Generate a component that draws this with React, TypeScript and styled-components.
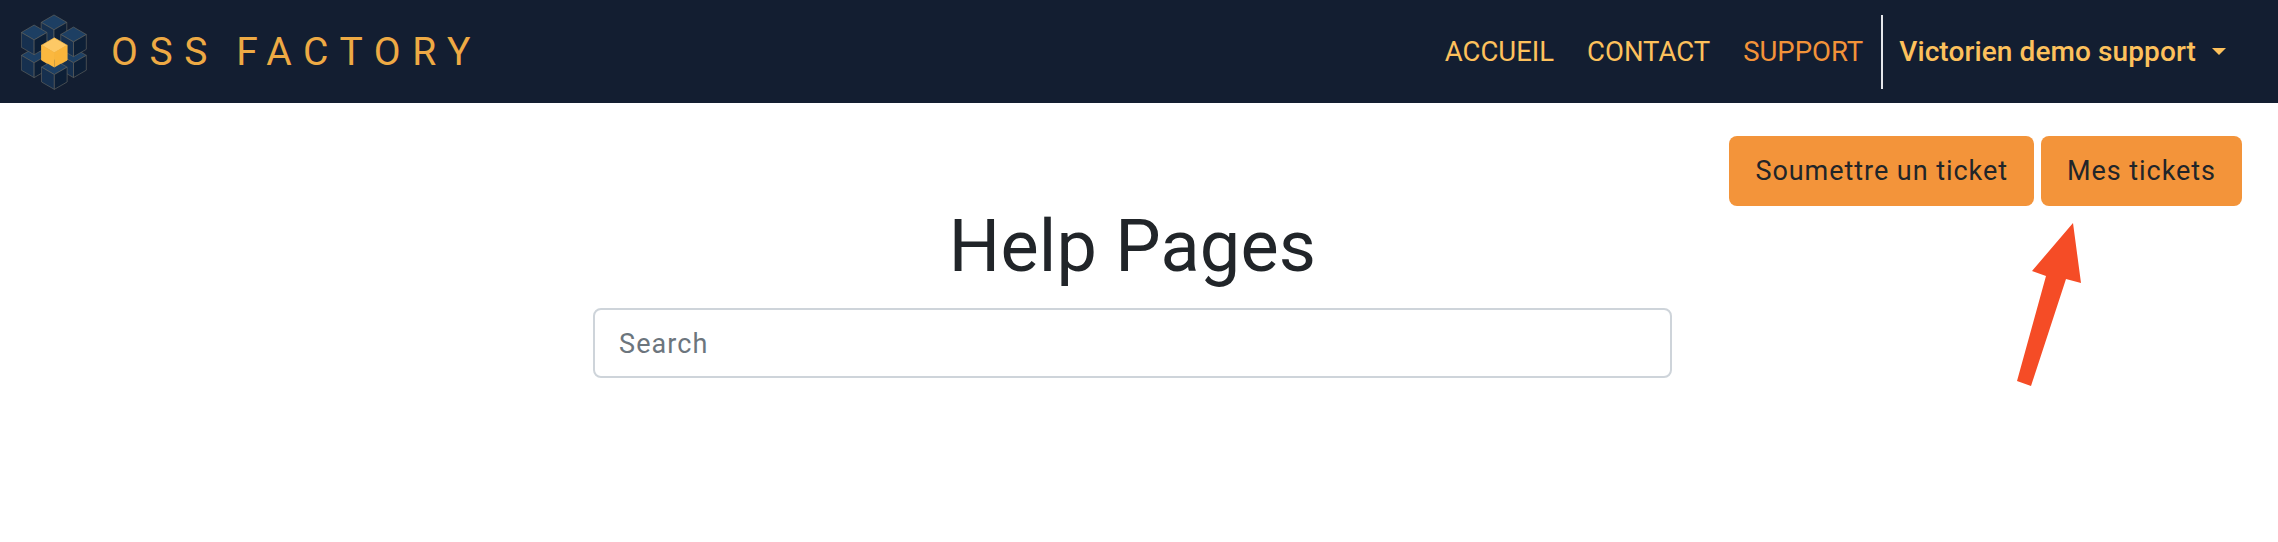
import styled, { createGlobalStyle } from 'styled-components';

const GlobalStyle = createGlobalStyle`
    html, body {
        margin: 0;
        background: #fff;
        font-family: "Roboto", "Liberation Sans", sans-serif;
    }
`;

const Navbar = styled.nav`
    display: flex;
    align-items: center;
    justify-content: space-between;
    height: 103px;
    padding: 0 52px 0 21px;
    background: #131e31;
`;

const Brand = styled.a`
    display: flex;
    align-items: center;
    gap: 24px;
`;

const BrandName = styled.span`
    font-size: 39px;
    font-weight: 400;
    letter-spacing: 11.6px;
    word-spacing: -4px;
    white-space: nowrap;
    color: #eeaa44;
`;

const NavLinks = styled.div`
    display: flex;
    align-items: center;
`;

const NavLink = styled.a<{ $active?: boolean }>`
    margin-right: 33px;
    font-size: 27.5px;
    color: ${props => (props.$active ? '#f39339' : '#fdc15c')};
    &:nth-child(3) {
        margin-right: 18px;
    }
`;

const UserMenu = styled.div`
    display: flex;
    align-items: center;
    gap: 16px;
    height: 74px;
    padding-left: 16px;
    border-left: 2px solid #e4e6ea;
    font-size: 28px;
    font-weight: 500;
    letter-spacing: 0.1px;
    color: #fdc15c;
`;

const Caret = styled.span`
    width: 0;
    height: 0;
    border-top: 7px solid #fdc15c;
    border-left: 7px solid transparent;
    border-right: 7px solid transparent;
`;

const Page = styled.main`
    position: relative;
    height: 439px;
`;

const Actions = styled.div`
    display: flex;
    justify-content: flex-end;
    gap: 7px;
    padding: 33px 36px 0 0;
`;

const ActionButton = styled.button`
    height: 70px;
    padding: 0 26px;
    border: 0;
    border-radius: 8px;
    background: #f3943a;
    color: #212529;
    font-family: inherit;
    font-size: 27px;
    letter-spacing: 0.95px;
`;

const Content = styled.section`
    display: flex;
    flex-direction: column;
    align-items: center;
    padding-right: 13px;
`;

const Title = styled.h1`
    margin: -2px 0 18px;
    font-size: 72px;
    font-weight: 400;
    letter-spacing: 0.2px;
    line-height: 86px;
    color: #212529;
`;

const SearchInput = styled.input`
    box-sizing: border-box;
    width: 1079px;
    height: 70px;
    padding: 2px 24px 0;
    border: 2px solid #ced4da;
    border-radius: 8px;
    font-family: inherit;
    font-size: 27px;
    letter-spacing: 1.1px;
    &::placeholder {
        color: #6c757d;
        opacity: 1;
    }
`;

const ArrowMark = styled.svg`
    position: absolute;
    left: 2010px;
    top: 116px;
`;

type CubeProps = {
    x: number;
    y: number;
    top: string;
    left: string;
    right: string;
    edge: string;
};

const Cube = ({ x, y, top, left, right, edge }: CubeProps) => (
    <g stroke={edge} strokeWidth="2" strokeLinejoin="round">
        <polygon points={`${x},${y} ${x + 38},${y + 22} ${x},${y + 44} ${x - 38},${y + 22}`} fill={top} />
        <polygon points={`${x - 38},${y + 22} ${x},${y + 44} ${x},${y + 88} ${x - 38},${y + 66}`} fill={left} />
        <polygon points={`${x + 38},${y + 22} ${x},${y + 44} ${x},${y + 88} ${x + 38},${y + 66}`} fill={right} />
    </g>
);

const blue = { top: '#1d3f63', left: '#16304f', right: '#0d1f36', edge: '#5f6360' };

const Logo = () => (
    <svg width="66" height="76" viewBox="36 25 196 224">
        <Cube x={134} y={27} {...blue} />
        <Cube x={75} y={125} {...blue} />
        <Cube x={192} y={125} {...blue} />
        <Cube x={75} y={57} {...blue} />
        <Cube x={192} y={63} {...blue} />
        <Cube x={135} y={95} top="#fdc966" left="#fbb83f" right="#f9b53b" edge="#fbbd4c" />
        <Cube x={135} y={160} {...blue} />
        <polygon points="97,117 135,139 135,183 97,161" fill="#fbb83f" />
        <polygon points="173,117 135,139 135,183 173,161" fill="#f9b53b" />
    </svg>
);

const App = () => (
    <>
        <GlobalStyle />
        <Navbar>
            <Brand>
                <Logo />
                <BrandName>OSS FACTORY</BrandName>
            </Brand>
            <NavLinks>
                <NavLink>ACCUEIL</NavLink>
                <NavLink>CONTACT</NavLink>
                <NavLink $active>SUPPORT</NavLink>
                <UserMenu>
                    Victorien demo support
                    <Caret />
                </UserMenu>
            </NavLinks>
        </Navbar>
        <Page>
            <Actions>
                <ActionButton>Soumettre un ticket</ActionButton>
                <ActionButton>Mes tickets</ActionButton>
            </Actions>
            <Content>
                <Title>Help Pages</Title>
                <SearchInput placeholder="Search" />
            </Content>
            <ArrowMark width="80" height="170" viewBox="0 0 80 170">
                <polygon points="63,4 71,64 56,60 21,167 7,162 36,57 22,52" fill="#f54c26" />
            </ArrowMark>
        </Page>
    </>
);

export default App;
